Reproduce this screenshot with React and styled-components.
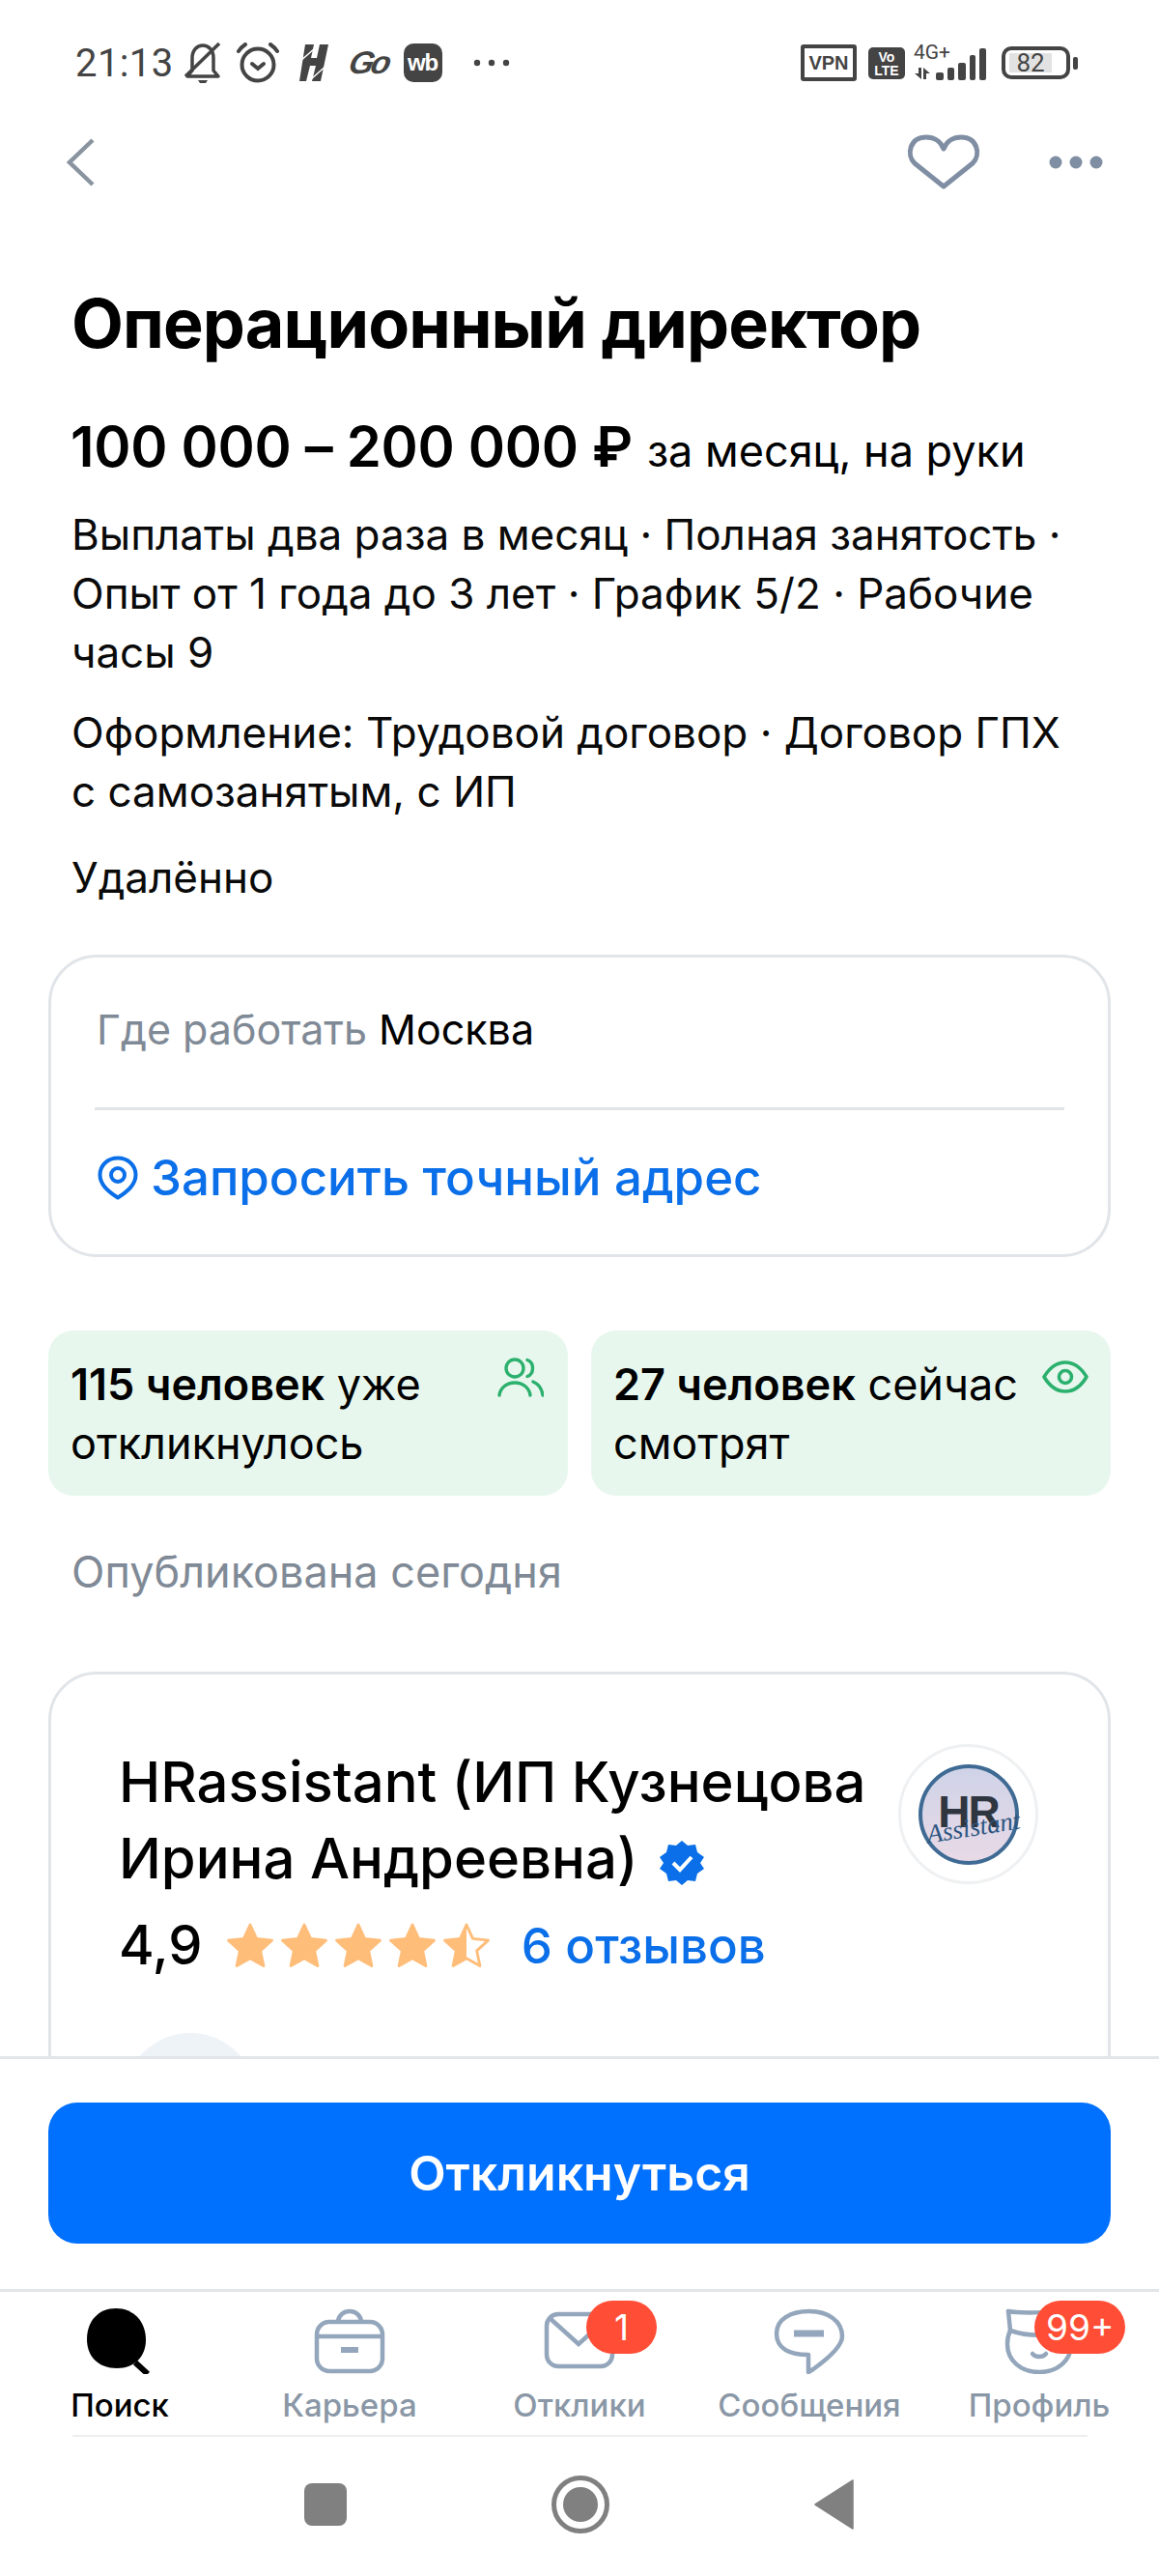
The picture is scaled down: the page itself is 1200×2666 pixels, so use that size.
import React from "react";
import styled, { createGlobalStyle } from "styled-components";

const GlobalStyle = createGlobalStyle`
  html, body {
    margin: 0;
    padding: 0;
    background: #fff;
  }
  * {
    box-sizing: border-box;
  }
`;

const Page = styled.div`
  width: 1200px;
  height: 2666px;
  display: flex;
  flex-direction: column;
  overflow: hidden;
  background: #fff;
  color: #000;
  font-family: Inter, "Liberation Sans", sans-serif;
`;

const StatusBar = styled.div`
  height: 90px;
  margin-top: 20px;
  padding: 0 84px 0 78px;
  display: flex;
  align-items: center;
  justify-content: space-between;
  flex-shrink: 0;
  color: #444;
`;

const StatusGroup = styled.div`
  display: flex;
  align-items: center;
`;

const Clock = styled.span`
  font-family: Roboto, sans-serif;
  font-size: 40px;
  letter-spacing: 0.4px;
  margin-right: 10px;
`;

const Slot = styled.span`
  display: flex;
  align-items: center;
  justify-content: center;
  margin-left: ${(p) => p.$gap || 0}px;
`;

const GoMark = styled.span`
  width: 38px;
  font-family: "Liberation Sans", sans-serif;
  font-size: 33px;
  font-weight: 700;
  font-style: italic;
  letter-spacing: -3px;
  margin-left: 22px;
  transform: skewX(-14deg);
`;

const WbMark = styled.span`
  width: 40px;
  height: 40px;
  margin-left: 18px;
  border-radius: 10px;
  background: #444;
  color: #fff;
  font-family: "Liberation Sans", sans-serif;
  font-size: 24px;
  font-weight: 700;
  letter-spacing: -1px;
  display: flex;
  align-items: center;
  justify-content: center;
`;

const VpnMark = styled.span`
  width: 58px;
  height: 38px;
  border: 4px solid #444;
  border-radius: 3px;
  font-family: "Liberation Sans", sans-serif;
  font-size: 20px;
  font-weight: 700;
  display: flex;
  align-items: center;
  justify-content: center;
`;

const VolteMark = styled.span`
  width: 38px;
  height: 33px;
  margin-left: 12px;
  border-radius: 5px;
  background: #444;
  color: #fff;
  font-family: "Liberation Sans", sans-serif;
  font-size: 14px;
  font-weight: 700;
  line-height: 14px;
  text-align: center;
  padding-top: 3px;
`;

const Network = styled.span`
  width: 76px;
  height: 38px;
  margin-left: 9px;
  position: relative;
  display: block;
`;

const NetworkLabel = styled.span`
  position: absolute;
  left: 0;
  top: 0;
  font-family: Roboto, sans-serif;
  font-size: 21px;
  line-height: 17px;
`;

const Battery = styled.span`
  width: 71px;
  height: 34px;
  margin-left: 15px;
  border: 4px solid #444;
  border-radius: 10px;
  padding: 3px 15px 3px 4px;
  display: flex;
`;

const BatteryFill = styled.span`
  flex: 1;
  background: #e2e2e2;
  font-family: Roboto, sans-serif;
  font-size: 26px;
  line-height: 20px;
  text-align: center;
`;

const BatteryNub = styled.span`
  width: 5px;
  height: 13px;
  margin-left: 3px;
  border-radius: 2px;
  background: #444;
`;

const Header = styled.div`
  height: 116px;
  padding: 0 58px 0 68px;
  display: flex;
  align-items: center;
  justify-content: space-between;
  flex-shrink: 0;
`;

const HeaderActions = styled.div`
  display: flex;
  align-items: center;
  gap: 71px;
`;

const Content = styled.div`
  height: 1902px;
  flex-shrink: 0;
  overflow: hidden;
  padding: 0 50px;
`;

const Title = styled.h1`
  margin: 73px 0 0 24px;
  font-size: 70px;
  line-height: 72px;
  font-weight: 700;
  letter-spacing: -0.9px;
  white-space: nowrap;
`;

const Salary = styled.div`
  margin: 61px 0 0 23px;
  font-size: 58px;
  line-height: 60px;
  font-weight: 600;
  letter-spacing: -0.3px;
  white-space: nowrap;
`;

const SalaryNote = styled.span`
  font-size: 45px;
  font-weight: 400;
  letter-spacing: 0;
  margin-left: 15px;
`;

const Info = styled.p`
  margin: ${(p) => p.$top}px 0 0 24px;
  font-size: 44px;
  line-height: 61px;
  font-weight: 400;
  color: #0a0a0a;
  white-space: nowrap;
`;

const Card = styled.div`
  margin-top: 49px;
  height: 313px;
  border: 3px solid #e1e5e9;
  border-radius: 50px;
  padding: 0 45px;
  display: flex;
  flex-direction: column;
`;

const WorkRow = styled.div`
  height: 158px;
  padding-bottom: 8px;
  border-bottom: 3px solid #e1e4e7;
  display: flex;
  align-items: center;
  gap: 12px;
  font-size: 43px;
`;

const Muted = styled.span`
  padding-left: 2px;
  color: #7f8a96;
`;

const AddressLink = styled.div`
  flex: 1;
  display: flex;
  align-items: center;
  gap: 13px;
  padding: 0 0 10px 3px;
  color: #0a6fe8;
  font-size: 51px;
  font-weight: 500;
`;

const StatsGrid = styled.div`
  margin-top: 76px;
  display: grid;
  grid-template-columns: 1fr 1fr;
  gap: 24px;
`;

const StatCard = styled.div`
  height: 171px;
  padding: 25px 24px 0 23px;
  border-radius: 26px;
  background: #e8f7ee;
  display: flex;
  justify-content: space-between;
  align-items: flex-start;
  font-size: 45px;
  line-height: 61px;
  white-space: nowrap;
`;

const StatIcon = styled.span`
  display: flex;
  margin: ${(p) => p.$top}px ${(p) => p.$right}px 0 0;
`;

const Strong = styled.b`
  font-weight: 600;
`;

const Published = styled.div`
  margin: 48px 0 0 24px;
  height: 61px;
  font-size: 45px;
  line-height: 61px;
  color: #7f8a96;
`;

const CompanyCard = styled.div`
  margin-top: 73px;
  height: 560px;
  border: 3px solid #e1e5e9;
  border-radius: 50px;
  padding: 72px 72px 0 70px;
`;

const CompanyTop = styled.div`
  display: flex;
  justify-content: space-between;
  align-items: flex-start;
`;

const CompanyText = styled.div`
  display: flex;
  flex-direction: column;
`;

const CompanyName = styled.div`
  font-size: 58px;
  line-height: 79px;
  font-weight: 500;
  white-space: nowrap;
`;

const Verified = styled.svg`
  margin-left: 22px;
  vertical-align: -8px;
`;

const RatingRow = styled.div`
  margin-top: 15px;
  display: flex;
  align-items: center;
`;

const RatingValue = styled.span`
  font-size: 56px;
  line-height: 70px;
  font-weight: 500;
  margin-right: 24px;
`;

const Stars = styled.span`
  display: flex;
  gap: 6px;
`;

const Reviews = styled.span`
  margin-left: 32px;
  color: #0a6fe8;
  font-size: 51px;
  font-weight: 500;
`;

const LogoFrame = styled.div`
  width: 145px;
  height: 145px;
  border: 3px solid #eef0f2;
  border-radius: 50%;
  display: flex;
  align-items: center;
  justify-content: center;
  flex-shrink: 0;
`;

const Logo = styled.div`
  width: 104px;
  height: 104px;
  border: 4px solid #3f6a94;
  border-radius: 50%;
  background: linear-gradient(180deg, #cfd3e8, #e8d9e6);
  position: relative;
  display: flex;
  justify-content: center;
  font-family: "Liberation Sans", sans-serif;
`;

const LogoLetters = styled.span`
  margin-top: 22px;
  font-size: 46px;
  line-height: 46px;
  font-weight: 700;
  letter-spacing: -2px;
  color: #2f3640;
`;

const LogoScript = styled.span`
  position: absolute;
  left: 4px;
  top: 46px;
  font-family: "Liberation Serif", serif;
  font-size: 27px;
  font-style: italic;
  color: #2d5680;
  transform: rotate(-9deg);
  white-space: nowrap;
`;

const SkeletonAvatar = styled.div`
  margin: 56px 0 0 5px;
  width: 138px;
  height: 138px;
  border-radius: 50%;
  background: #eef3f8;
`;

const ActionBar = styled.div`
  height: 244px;
  flex-shrink: 0;
  padding: 45px 50px 0;
  background: #fff;
  border-top: 3px solid #e2e6ea;
  border-bottom: 3px solid #e2e6ea;
`;

const RespondButton = styled.div`
  height: 146px;
  border-radius: 30px;
  background: #0070ff;
  color: #fff;
  font-size: 50px;
  font-weight: 600;
  display: flex;
  align-items: center;
  justify-content: center;
`;

const TabBar = styled.nav`
  height: 150px;
  flex-shrink: 0;
  padding: 0 5px;
  display: grid;
  grid-template-columns: repeat(5, 1fr);
  position: relative;
  &::after {
    content: "";
    position: absolute;
    left: 75px;
    right: 74px;
    bottom: 0;
    height: 2px;
    background: #eceef0;
  }
`;

const Tab = styled.div`
  position: relative;
  display: flex;
  flex-direction: column;
  align-items: center;
  padding-top: 17px;
  color: ${(p) => (p.$active ? "#000" : "#8a97a6")};
`;

const TabLabel = styled.span`
  margin-top: 12px;
  font-size: 33px;
  line-height: 40px;
  font-weight: 500;
  white-space: nowrap;
`;

const Badge = styled.span`
  position: absolute;
  top: 9px;
  left: ${(p) => p.$left}px;
  height: 55px;
  min-width: 73px;
  padding: 0 12px;
  border-radius: 28px;
  background: #ff4d36;
  color: #fff;
  font-size: 37px;
  font-weight: 400;
  line-height: 55px;
  text-align: center;
`;

const SystemNav = styled.div`
  flex: 1;
  display: grid;
  grid-template-columns: 44px 60px 42px;
  justify-content: center;
  align-items: center;
  column-gap: 212px;
  padding: 0 0 5px 0;
`;

const SquareKey = styled.span`
  width: 44px;
  height: 44px;
  border-radius: 8px;
  background: #808080;
`;

const CircleKey = styled.span`
  width: 60px;
  height: 60px;
  border-radius: 50%;
  border: 5px solid #808080;
  display: flex;
  align-items: center;
  justify-content: center;
  &::before {
    content: "";
    width: 36px;
    height: 36px;
    border-radius: 50%;
    background: #808080;
  }
`;

const PeopleIcon = () => (
  <svg width="48" height="42" viewBox="0 0 48 42" fill="none" stroke="#2bb06d" strokeWidth="3.4" strokeLinecap="round">
    <circle cx="18" cy="11" r="9" />
    <path d="M31 2.5c3.400 1.200 5.500 4.600 5.500 8.500s-2.100 7.300-5.500 8.500" />
    <path d="M2 39c1-8 8-13 16-13s15 5 16 13" />
    <path d="M37 25c5 2 9 7 10 14" />
  </svg>
);

const EyeIcon = () => (
  <svg width="48" height="34" viewBox="0 0 48 34" fill="none" stroke="#2bb06d" strokeWidth="3.6">
    <path d="M2 17C8 7 15 2 24 2s16 5 22 15c-6 10-13 15-22 15S8 27 2 17Z" strokeLinejoin="round" />
    <circle cx="24" cy="17" r="6.5" />
  </svg>
);

const PinIcon = () => (
  <svg width="42" height="46" viewBox="0 0 42 46" fill="none" stroke="#0a6fe8" strokeWidth="4">
    <path d="M21 43.500C11 37 2.500 30 2.500 20 2.500 10 10.500 2.500 21 2.500S39.500 10 39.500 20C39.500 30 31 37 21 43.500Z" strokeLinejoin="round" />
    <circle cx="21" cy="20" r="7" />
  </svg>
);

const Star = ({ half }) => (
  <svg width="50" height="47" viewBox="0 0 24 23">
    <path
      d="M12 1l3.200 7 7.800.9-5.800 5.200 1.600 7.700L12 18l-6.800 3.800 1.600-7.700L1 8.900 8.800 8z"
      fill={half ? "#fff" : "#ffbd7a"}
      stroke="#ffbd7a"
      strokeWidth="1.4"
      strokeLinejoin="round"
    />
    {half && <path d="M12 1v17l-6.800 3.800 1.600-7.700L1 8.900 8.800 8z" fill="#ffbd7a" />}
  </svg>
);

const BagIcon = () => (
  <svg width="74" height="68" viewBox="0 0 74 68" fill="none" stroke="#93a6bb" strokeWidth="4.5" strokeLinecap="round">
    <path d="M25 13c1-6 6-10 12-10s11 4 12 10" />
    <rect x="3" y="14" width="68" height="51" rx="13" />
    <path d="M4 29h66" />
    <path d="M28 43h18" strokeWidth="6" strokeLinecap="butt" />
  </svg>
);

const EnvelopeIcon = () => (
  <svg width="74" height="68" viewBox="0 0 74 68" fill="none" stroke="#93a6bb" strokeWidth="4.5">
    <rect x="3" y="6" width="68" height="54" rx="12" />
    <path d="M6 10l30 27 30-27" />
  </svg>
);

const ChatIcon = () => (
  <svg width="74" height="68" viewBox="0 0 74 68" fill="none" stroke="#93a6bb" strokeWidth="4.5">
    <path
      d="M37 3c19 0 34 10 34 26 0 9-12 21-30 34l-5 3V48C17 48 3 42 3 26 3 11 18 3 37 3Z"
      strokeLinejoin="round"
    />
    <path d="M21 26h31" strokeWidth="7" />
  </svg>
);

const FaceIcon = () => (
  <svg width="74" height="68" viewBox="0 0 74 68" fill="none" stroke="#93a6bb" strokeWidth="4.5" strokeLinecap="round">
    <path d="M5 3l2 20c-2 4-3 9-3 14 0 17 14 29 33 29s33-12 33-29c0-5-1-10-3-14" />
    <path d="M5 3c10 2 40 2 60-1M7 23c18 6 40 6 60 0" />
    <path d="M30 47c3 4 11 4 14 0" />
  </svg>
);

const SearchIcon = () => (
  <svg width="68" height="68" viewBox="0 0 68 68">
    <path d="M30 0c18 0 31 13 31 33 0 16-11 29-30 29C12 62 0 50 0 32 0 13 12 0 30 0Z" fill="#000" />
    <path d="M50 56l13 12" stroke="#000" strokeWidth="6" />
  </svg>
);

const App = () => (
  <Page>
    <GlobalStyle />
    <StatusBar>
      <StatusGroup>
        <Clock>21:13</Clock>
        <Slot>
          <svg width="40" height="44" viewBox="0 0 40 44" fill="none" stroke="#444" strokeWidth="3.5">
            <path d="M9 30V17C9 9 14 4 20 4s11 5 11 13v13l5 6H4z" strokeLinejoin="round" />
            <path d="M37 2L2 36" />
            <path d="M15 40h10l-2 3h-6z" fill="#444" stroke="none" />
          </svg>
        </Slot>
        <Slot $gap={15}>
          <svg width="44" height="42" viewBox="0 0 44 42" fill="none" stroke="#444" strokeWidth="4" strokeLinecap="round">
            <circle cx="22" cy="23" r="16.500" />
            <path d="M16 22l6 5 6-5" />
            <path d="M2 9c2-3 4-5 7-7M42 9c-2-3-4-5-7-7" />
          </svg>
        </Slot>
        <Slot $gap={21}>
          <svg width="30" height="38" viewBox="0 0 30 38" fill="#444">
            <path d="M6 0h9l-3 14h6l3-14h9l-8 38h-9l4-16h-6l-4 16H0z" />
            <path d="M0 18L16 4M12 36L30 20" stroke="#fff" strokeWidth="1.5" />
          </svg>
        </Slot>
        <GoMark>Go</GoMark>
        <WbMark>wb</WbMark>
        <Slot $gap={32}>
          <svg width="38" height="10" viewBox="0 0 38 10" fill="#444">
            <circle cx="4" cy="5" r="3.2" />
            <circle cx="19" cy="5" r="3.2" />
            <circle cx="34" cy="5" r="3.2" />
          </svg>
        </Slot>
      </StatusGroup>
      <StatusGroup>
        <VpnMark>VPN</VpnMark>
        <VolteMark>
          Vo
          <br />
          LTE
        </VolteMark>
        <Network>
          <NetworkLabel>4G+</NetworkLabel>
          <svg width="76" height="38" viewBox="0 0 76 38" fill="#444">
            <path d="M1 30l4 0 0-6 3 0 0 12zM10 24l0 12 3 0 0-6 4 0z" />
            <rect x="23" y="29" width="8" height="8" rx="2" />
            <rect x="35" y="24" width="7" height="13" rx="2" />
            <rect x="46" y="19" width="8" height="18" rx="2" />
            <rect x="58" y="11" width="6" height="26" rx="2" />
            <rect x="68" y="4" width="7" height="33" rx="2" />
          </svg>
        </Network>
        <Battery>
          <BatteryFill>82</BatteryFill>
        </Battery>
        <BatteryNub />
      </StatusGroup>
    </StatusBar>
    <Header>
      <svg width="32" height="50" viewBox="0 0 32 50" fill="none" stroke="#8a94a0" strokeWidth="4.5">
        <path d="M28 2L4 25l24 23" />
      </svg>
      <HeaderActions>
        <svg width="76" height="58" viewBox="0 0 76 58" fill="none" stroke="#7f8ea3" strokeWidth="5" strokeLinejoin="round">
          <path d="M38 54L8 30C-1 21 3 3 20 3c8 0 15 4 18 12 3-8 10-12 18-12 17 0 21 18 12 27z" />
        </svg>
        <svg width="56" height="14" viewBox="0 0 56 14" fill="#7f8ea3">
          <circle cx="7" cy="7" r="6.5" />
          <circle cx="28" cy="7" r="6.5" />
          <circle cx="49" cy="7" r="6.5" />
        </svg>
      </HeaderActions>
    </Header>
    <Content>
      <Title>Операционный директор</Title>
      <Salary>
        100 000 – 200 000 ₽<SalaryNote>за месяц, на руки</SalaryNote>
      </Salary>
      <Info $top={26}>
        Выплаты два раза в месяц · Полная занятость ·
        <br />
        Опыт от 1 года до 3 лет · График 5/2 · Рабочие
        <br />
        часы 9
      </Info>
      <Info $top={22}>
        Оформление: Трудовой договор · Договор ГПХ
        <br />с самозанятым, с ИП
      </Info>
      <Info $top={28}>Удалённо</Info>
      <Card>
        <WorkRow>
          <Muted>Где работать</Muted>
          <span>Москва</span>
        </WorkRow>
        <AddressLink>
          <PinIcon />
          Запросить точный адрес
        </AddressLink>
      </Card>
      <StatsGrid>
        <StatCard>
          <span>
            <Strong>115 человек</Strong> уже
            <br />
            откликнулось
          </span>
          <StatIcon $top={3} $right={1}>
            <PeopleIcon />
          </StatIcon>
        </StatCard>
        <StatCard>
          <span>
            <Strong>27 человек</Strong> сейчас
            <br />
            смотрят
          </span>
          <StatIcon $top={6} $right={-1}>
            <EyeIcon />
          </StatIcon>
        </StatCard>
      </StatsGrid>
      <Published>Опубликована сегодня</Published>
      <CompanyCard>
        <CompanyTop>
          <CompanyText>
            <CompanyName>
              HRassistant (ИП Кузнецова
              <br />
              Ирина Андреевна)
              <Verified width="48" height="48" viewBox="0 0 48 48">
                <path
                  d="M24 1l6 5 8-1 2 8 7 5-4 6 4 6-7 5-2 8-8-1-6 5-6-5-8 1-2-8-7-5 4-6-4-6 7-5 2-8 8 1z"
                  fill="#0a6fe8"
                />
                <path d="M15 24l7 7 12-13" fill="none" stroke="#fff" strokeWidth="4" />
              </Verified>
            </CompanyName>
            <RatingRow>
              <RatingValue>4,9</RatingValue>
              <Stars>
                <Star />
                <Star />
                <Star />
                <Star />
                <Star half />
              </Stars>
              <Reviews>6 отзывов</Reviews>
            </RatingRow>
          </CompanyText>
          <LogoFrame>
            <Logo>
              <LogoLetters>HR</LogoLetters>
              <LogoScript>Assistant</LogoScript>
            </Logo>
          </LogoFrame>
        </CompanyTop>
        <SkeletonAvatar />
      </CompanyCard>
    </Content>
    <ActionBar>
      <RespondButton>Откликнуться</RespondButton>
    </ActionBar>
    <TabBar>
      <Tab $active>
        <SearchIcon />
        <TabLabel>Поиск</TabLabel>
      </Tab>
      <Tab>
        <BagIcon />
        <TabLabel>Карьера</TabLabel>
      </Tab>
      <Tab>
        <EnvelopeIcon />
        <TabLabel>Отклики</TabLabel>
        <Badge $left={126}>1</Badge>
      </Tab>
      <Tab>
        <ChatIcon />
        <TabLabel>Сообщения</TabLabel>
      </Tab>
      <Tab>
        <FaceIcon />
        <TabLabel>Профиль</TabLabel>
        <Badge $left={114}>99+</Badge>
      </Tab>
    </TabBar>
    <SystemNav>
      <SquareKey />
      <CircleKey />
      <svg width="42" height="52" viewBox="0 0 42 52" fill="#808080">
        <path d="M40 1v50L1 26z" stroke="#808080" strokeWidth="1.5" strokeLinejoin="round" />
      </svg>
    </SystemNav>
  </Page>
);

export default App;
